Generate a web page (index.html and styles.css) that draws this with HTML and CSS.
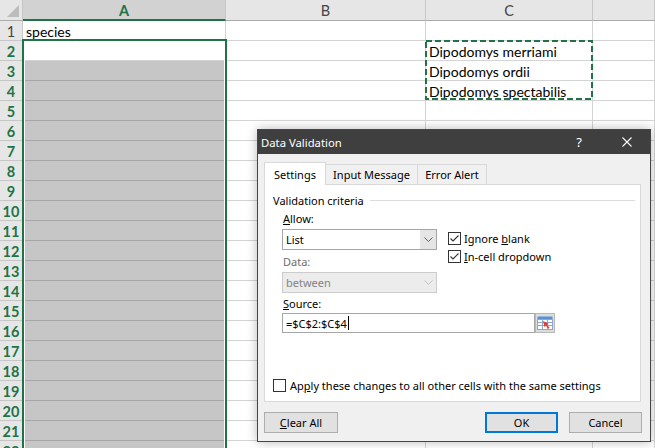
FILE: index.html
```html
<!DOCTYPE html>
<html>
<head>
<meta charset="utf-8">
<link rel="stylesheet" href="styles.css">
</head>
<body>
<div class="sheet">
  <div class="hrow">
    <div class="corner"><span class="tri"></span></div>
    <div class="ch cola sel">A</div>
    <div class="ch colb">B</div>
    <div class="ch colc">C</div>
    <div class="ch cold"></div>
  </div>
  <div class="row"><div class="rh">1</div><div class="c cola">species</div><div class="c colb"></div><div class="c colc"></div><div class="c cold"></div></div>
  <div class="row"><div class="rh on">2</div><div class="c cola"></div><div class="c colb"></div><div class="c colc">Dipodomys merriami</div><div class="c cold"></div></div>
  <div class="row"><div class="rh on">3</div><div class="c cola fill"></div><div class="c colb"></div><div class="c colc">Dipodomys ordii</div><div class="c cold"></div></div>
  <div class="row"><div class="rh on">4</div><div class="c cola fill"></div><div class="c colb"></div><div class="c colc">Dipodomys spectabilis</div><div class="c cold"></div></div>
  <div class="row"><div class="rh on">5</div><div class="c cola fill"></div><div class="c colb"></div><div class="c colc"></div><div class="c cold"></div></div>
  <div class="row"><div class="rh on">6</div><div class="c cola fill"></div><div class="c colb"></div><div class="c colc"></div><div class="c cold"></div></div>
  <div class="row"><div class="rh on">7</div><div class="c cola fill"></div><div class="c colb"></div><div class="c colc"></div><div class="c cold"></div></div>
  <div class="row"><div class="rh on">8</div><div class="c cola fill"></div><div class="c colb"></div><div class="c colc"></div><div class="c cold"></div></div>
  <div class="row"><div class="rh on">9</div><div class="c cola fill"></div><div class="c colb"></div><div class="c colc"></div><div class="c cold"></div></div>
  <div class="row"><div class="rh on">10</div><div class="c cola fill"></div><div class="c colb"></div><div class="c colc"></div><div class="c cold"></div></div>
  <div class="row"><div class="rh on">11</div><div class="c cola fill"></div><div class="c colb"></div><div class="c colc"></div><div class="c cold"></div></div>
  <div class="row"><div class="rh on">12</div><div class="c cola fill"></div><div class="c colb"></div><div class="c colc"></div><div class="c cold"></div></div>
  <div class="row"><div class="rh on">13</div><div class="c cola fill"></div><div class="c colb"></div><div class="c colc"></div><div class="c cold"></div></div>
  <div class="row"><div class="rh on">14</div><div class="c cola fill"></div><div class="c colb"></div><div class="c colc"></div><div class="c cold"></div></div>
  <div class="row"><div class="rh on">15</div><div class="c cola fill"></div><div class="c colb"></div><div class="c colc"></div><div class="c cold"></div></div>
  <div class="row"><div class="rh on">16</div><div class="c cola fill"></div><div class="c colb"></div><div class="c colc"></div><div class="c cold"></div></div>
  <div class="row"><div class="rh on">17</div><div class="c cola fill"></div><div class="c colb"></div><div class="c colc"></div><div class="c cold"></div></div>
  <div class="row"><div class="rh on">18</div><div class="c cola fill"></div><div class="c colb"></div><div class="c colc"></div><div class="c cold"></div></div>
  <div class="row"><div class="rh on">19</div><div class="c cola fill"></div><div class="c colb"></div><div class="c colc"></div><div class="c cold"></div></div>
  <div class="row"><div class="rh on">20</div><div class="c cola fill"></div><div class="c colb"></div><div class="c colc"></div><div class="c cold"></div></div>
  <div class="row"><div class="rh on">21</div><div class="c cola fill"></div><div class="c colb"></div><div class="c colc"></div><div class="c cold"></div></div>
  <div class="row"><div class="rh on">22</div><div class="c cola fill"></div><div class="c colb"></div><div class="c colc"></div><div class="c cold"></div></div>
</div>

<div class="selbox"></div>
<svg class="ants" width="168" height="60" viewBox="0 0 168 60"><rect x="1" y="1" width="166" height="58" fill="none" stroke="#217346" stroke-width="2" stroke-dasharray="6 3"/></svg>

<div class="dlg">
  <div class="title">
    <span class="ttext">Data Validation</span>
    <span class="help">?</span>
    <svg class="close" width="10" height="10" viewBox="0 0 10 10"><path d="M0.5 0.5 L9.5 9.5 M9.5 0.5 L0.5 9.5" stroke="#ffffff" stroke-width="1.1" fill="none"/></svg>
  </div>
  <div class="content">
    <div class="tabs">
      <div class="tab active t1">Settings</div>
      <div class="tab t2">Input Message</div>
      <div class="tab t3">Error Alert</div>
    </div>
    <div class="panel">
      <div class="legend"><span>Validation criteria</span><span class="rule"></span></div>
      <div class="form">
        <div class="leftcol">
          <div class="lbl"><u>A</u>llow:</div>
          <div class="combo"><span class="val">List</span><span class="arrow"><svg width="9" height="5" viewBox="0 0 9 5"><path d="M0.5 0.5 L4.5 4.5 L8.5 0.5" stroke="#606060" fill="none"/></svg></span></div>
          <div class="lbl dis lbl2">Data:</div>
          <div class="combo off"><span class="val">between</span><span class="arrow"><svg width="9" height="5" viewBox="0 0 9 5"><path d="M0.5 0.5 L4.5 4.5 L8.5 0.5" stroke="#c4c4c4" fill="none"/></svg></span></div>
        </div>
        <div class="rightcol">
          <div class="chk"><svg class="box" width="13" height="13" viewBox="0 0 13 13"><rect x="0.5" y="0.5" width="12" height="12" fill="#fff" stroke="#333"/><path d="M2.5 6.5 L5 9 L10.5 3.5" stroke="#333" fill="none" stroke-width="1.1"/></svg><span>Ignore <u>b</u>lank</span></div>
          <div class="chk chk2"><svg class="box" width="13" height="13" viewBox="0 0 13 13"><rect x="0.5" y="0.5" width="12" height="12" fill="#fff" stroke="#333"/><path d="M2.5 6.5 L5 9 L10.5 3.5" stroke="#333" fill="none" stroke-width="1.1"/></svg><span><u>I</u>n-cell dropdown</span></div>
        </div>
      </div>
      <div class="srcblock">
        <div class="lbl"><u>S</u>ource:</div>
        <div class="srcrow">
          <div class="input">=$C$2:$C$4<span class="caret"></span></div>
          <div class="refbtn"><svg width="16" height="14" viewBox="0 0 16 14">
            <rect x="0.5" y="0.5" width="15" height="3" fill="#5b8fd6"/>
            <rect x="0.5" y="3.5" width="15" height="10" fill="#ffffff" stroke="#8aa8d0"/>
            <path d="M0.5 6.5 H15.5 M0.5 9.5 H15.5 M5.5 3.5 V13.5 M10.5 3.5 V13.5" stroke="#8aa8d0"/>
            <path d="M6 5 L12 8 L9.8 8.6 L12.5 11.8 L11.3 12.7 L8.8 9.6 L7.6 11.3 Z" fill="#e23b2e"/>
          </svg></div>
        </div>
      </div>
      <div class="apply"><span class="ebox"></span><span>Ap<u>p</u>ly these changes to all other cells with the same settings</span></div>
    </div>
    <div class="buttons">
      <div class="btn"><u>C</u>lear All</div>
      <div class="spacer"></div>
      <div class="btn def">OK</div>
      <div class="btn">Cancel</div>
    </div>
  </div>
</div>
</body>
</html>
```
FILE: styles.css
```css
html, body {
  margin: 0;
  padding: 0;
}
body {
  width: 655px;
  height: 448px;
  overflow: hidden;
  position: relative;
  background: #ffffff;
  font-family: "Lato", "Liberation Sans", sans-serif;
}

.sheet {
  display: flex;
  flex-direction: column;
  width: 655px;
}
.hrow, .row {
  display: flex;
  flex: none;
}
.hrow { height: 21px; }
.row { height: 20px; }

.cola { width: 203px; }
.colb { width: 200px; }
.colc { width: 167px; }
.cold { flex: 1; }

.corner {
  width: 23px;
  box-sizing: border-box;
  background: #e6e6e6;
  border-right: 1px solid #c6c6c6;
  border-bottom: 1px solid #ababab;
  position: relative;
}
.tri {
  position: absolute;
  right: 3px;
  bottom: 3px;
  width: 0;
  height: 0;
  border-left: 12px solid transparent;
  border-bottom: 12px solid #bcbcbc;
}
.ch {
  box-sizing: border-box;
  background: #e6e6e6;
  border-right: 1px solid #c6c6c6;
  border-bottom: 1px solid #ababab;
  display: flex;
  align-items: center;
  justify-content: center;
  font-size: 14.5px;
  color: #444444;
}
.ch.sel {
  background: #d2d2d2;
  color: #217346;
  font-weight: bold;
  border-bottom: 2px solid #217346;
  padding-top: 1px;
}

.rh {
  width: 23px;
  box-sizing: border-box;
  background: #e6e6e6;
  border-right: 1px solid #c6c6c6;
  border-bottom: 1px solid #c6c6c6;
  display: flex;
  align-items: center;
  justify-content: center;
  font-size: 14.5px;
  color: #444444;
  padding-top: 1px;
}
.rh.on {
  color: #217346;
  font-weight: bold;
}
.c {
  box-sizing: border-box;
  border-right: 1px solid #d4d4d4;
  border-bottom: 1px solid #d4d4d4;
  font-size: 14px;
  color: #000000;
  padding: 2px 0 0 3px;
  white-space: nowrap;
  overflow: hidden;
  line-height: 17px;
}
.c.fill {
  background: #c6c6c6;
  border-bottom-color: #a6a6a6;
}

.selbox {
  position: absolute;
  left: 22px;
  top: 39px;
  width: 205px;
  height: 430px;
  box-sizing: border-box;
  border: 2px solid #217346;
  box-shadow: inset 0 0 0 1px #ffffff;
}
.ants {
  position: absolute;
  left: 425px;
  top: 40px;
}

/* dialog */
.dlg {
  position: absolute;
  left: 257px;
  top: 129px;
  width: 394px;
  height: 313px;
  box-sizing: border-box;
  border: 1px solid #454545;
  background: #f0f0f0;
  box-shadow: 0 0 10px rgba(0,0,0,0.28);
  display: flex;
  flex-direction: column;
  font-family: "Noto Sans", "Open Sans", sans-serif;
  font-size: 11px;
  color: #000000;
}
.title {
  height: 24px;
  background: #3f3f3f;
  color: #ffffff;
  display: flex;
  align-items: center;
  padding-left: 3px;
  flex: none;
}
.ttext {
  flex: 1;
  font-size: 11.3px;
}
.help {
  font-size: 13px;
  margin-right: 40px;
  color: #ffffff;
}
.close {
  margin-right: 18px;
}
.content {
  padding: 8px 0 0 6px;
  display: flex;
  flex-direction: column;
}
.tabs {
  display: flex;
  align-items: flex-end;
  height: 22px;
  position: relative;
  z-index: 2;
}
.tab {
  box-sizing: border-box;
  height: 20px;
  border: 1px solid #d9d9d9;
  border-bottom: none;
  background: #f0f0f0;
  display: flex;
  align-items: center;
  justify-content: center;
  margin-left: -1px;
}
.tab.active {
  height: 23px;
  margin-bottom: -1px;
  background: #ffffff;
  margin-left: 0;
  position: relative;
  z-index: 3;
}
.t1 { width: 62px; }
.t2 { width: 93px; }
.t3 { width: 70px; }

.panel {
  width: 377px;
  height: 218px;
  box-sizing: border-box;
  background: #ffffff;
  border: 1px solid #d9d9d9;
  display: flex;
  flex-direction: column;
  position: relative;
  z-index: 1;
}
.legend {
  display: flex;
  align-items: center;
  height: 16px;
  margin: 7px 5px 0 8px;
}
.rule {
  flex: 1;
  height: 1px;
  background: #dcdcdc;
  margin-left: 6px;
}
.form {
  display: flex;
  margin-left: 17px;
  margin-top: 3px;
}
.leftcol {
  width: 155px;
  display: flex;
  flex-direction: column;
}
.lbl {
  height: 16px;
  line-height: 16px;
  padding-left: 1px;
}
.lbl.dis { color: #6d6d6d; }
.lbl2 { margin-top: 4px; }
.combo {
  margin-top: 2px;
  height: 21px;
  box-sizing: border-box;
  border: 1px solid #a6a6a6;
  background: #ffffff;
  display: flex;
  align-items: stretch;
}
.combo .val {
  flex: 1;
  display: flex;
  align-items: center;
  padding-left: 3px;
}
.combo .arrow {
  width: 16px;
  background: #e5e5e5;
  display: flex;
  align-items: center;
  justify-content: center;
}
.combo.off {
  background: #ececec;
  border-color: #cccccc;
  color: #838383;
}
.combo.off .arrow { background: #ececec; }

.rightcol {
  margin-left: 11px;
  padding-top: 21px;
  display: flex;
  flex-direction: column;
}
.chk {
  display: flex;
  align-items: center;
  height: 13px;
}
.chk .box { margin-right: 3px; flex: none; }
.chk2 { margin-top: 5px; }

.srcblock {
  margin-left: 17px;
  margin-top: 3px;
}
.srcrow {
  display: flex;
  margin-top: 1px;
}
.input {
  width: 253px;
  height: 20px;
  box-sizing: border-box;
  border: 1px solid #a6a6a6;
  background: #ffffff;
  display: flex;
  align-items: center;
  padding-left: 3px;
}
.caret {
  width: 1px;
  height: 14px;
  background: #000;
  margin-left: 1px;
}
.refbtn {
  width: 20px;
  height: 20px;
  box-sizing: border-box;
  border: 1px solid #b9b9b9;
  background: #dcdcdc;
  display: flex;
  align-items: center;
  justify-content: center;
}
.apply {
  margin-top: auto;
  margin-left: 8px;
  margin-bottom: 8px;
  height: 16px;
  display: flex;
  align-items: center;
}
.ebox {
  width: 13px;
  height: 13px;
  box-sizing: border-box;
  border: 1px solid #333333;
  background: #ffffff;
  margin-right: 4px;
  flex: none;
}
.buttons {
  display: flex;
  margin-top: 10px;
  height: 21px;
}
.spacer { flex: 1; }
.btn {
  width: 74px;
  height: 21px;
  box-sizing: border-box;
  border: 1px solid #adadad;
  background: #e1e1e1;
  display: flex;
  align-items: center;
  justify-content: center;
}
.btn.def {
  border: 2px solid #0078d7;
  width: 73px;
}
.btn + .btn { margin-left: 11px; }
.buttons .btn:last-child {
  width: 73px;
  margin-right: 8px;
}
u { text-decoration: underline; text-underline-offset: 1px; }
```
